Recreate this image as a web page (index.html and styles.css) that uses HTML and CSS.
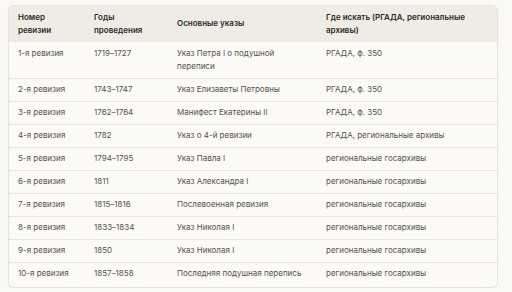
FILE: index.html
```html
<!DOCTYPE html>
<html lang="ru">
<head>
<meta charset="utf-8">
<link rel="stylesheet" href="styles.css">
</head>
<body>
<div class="wrap">
<table class="tbl">
<thead>
<tr><th class="c1">Номер ревизии</th><th class="c2">Годы проведения</th><th class="c3">Основные указы</th><th class="c4">Где искать (РГАДА, региональные архивы)</th></tr>
</thead>
<tbody>
<tr><td>1-я ревизия</td><td>1719–1727</td><td>Указ Петра I о подушной переписи</td><td>РГАДА, ф. 350</td></tr>
<tr><td>2-я ревизия</td><td>1743–1747</td><td>Указ Елизаветы Петровны</td><td>РГАДА, ф. 350</td></tr>
<tr><td>3-я ревизия</td><td>1762–1764</td><td>Манифест Екатерины II</td><td>РГАДА, ф. 350</td></tr>
<tr><td>4-я ревизия</td><td>1782</td><td>Указ о 4-й ревизии</td><td>РГАДА, региональные архивы</td></tr>
<tr><td>5-я ревизия</td><td>1794–1795</td><td>Указ Павла I</td><td>региональные госархивы</td></tr>
<tr><td>6-я ревизия</td><td>1811</td><td>Указ Александра I</td><td>региональные госархивы</td></tr>
<tr><td>7-я ревизия</td><td>1815–1816</td><td>Послевоенная ревизия</td><td>региональные госархивы</td></tr>
<tr><td>8-я ревизия</td><td>1833–1834</td><td>Указ Николая I</td><td>региональные госархивы</td></tr>
<tr><td>9-я ревизия</td><td>1850</td><td>Указ Николая I</td><td>региональные госархивы</td></tr>
<tr><td>10-я ревизия</td><td>1857–1858</td><td>Последняя подушная перепись</td><td>региональные госархивы</td></tr>
</tbody>
</table>
</div>
</body>
</html>
```
FILE: styles.css
```css
html, body { margin: 0; padding: 0; background: #faf9f6; }
body { padding: 5px 14px 0 8px; font-family: Inter, "Noto Sans", sans-serif; }
.wrap {
  border: 1px solid #e6e3dc;
  border-radius: 6px;
  overflow: hidden;
  box-shadow: 0 1px 2px rgba(0,0,0,0.06);
  background: #fbfaf7;
}
.tbl { width: 100%; border-collapse: collapse; font-size: 8px; line-height: 13.5px; }
.tbl th {
  background: #efece6;
  color: #2a2825;
  font-weight: 600;
  text-align: left;
  padding: 4.5px 9px;
  vertical-align: middle;
}
.tbl td {
  color: #55524d;
  padding: 4.5px 9px 4px;
  vertical-align: top;
  border-top: 1px solid #e8e5df;
}
.tbl tbody tr:first-child td { border-top: none; }
.tbl tbody tr:last-child td { padding-bottom: 6px; }
.c1 { width: 58px; }
.c2 { width: 65px; }
.c3 { width: 131px; }
```
